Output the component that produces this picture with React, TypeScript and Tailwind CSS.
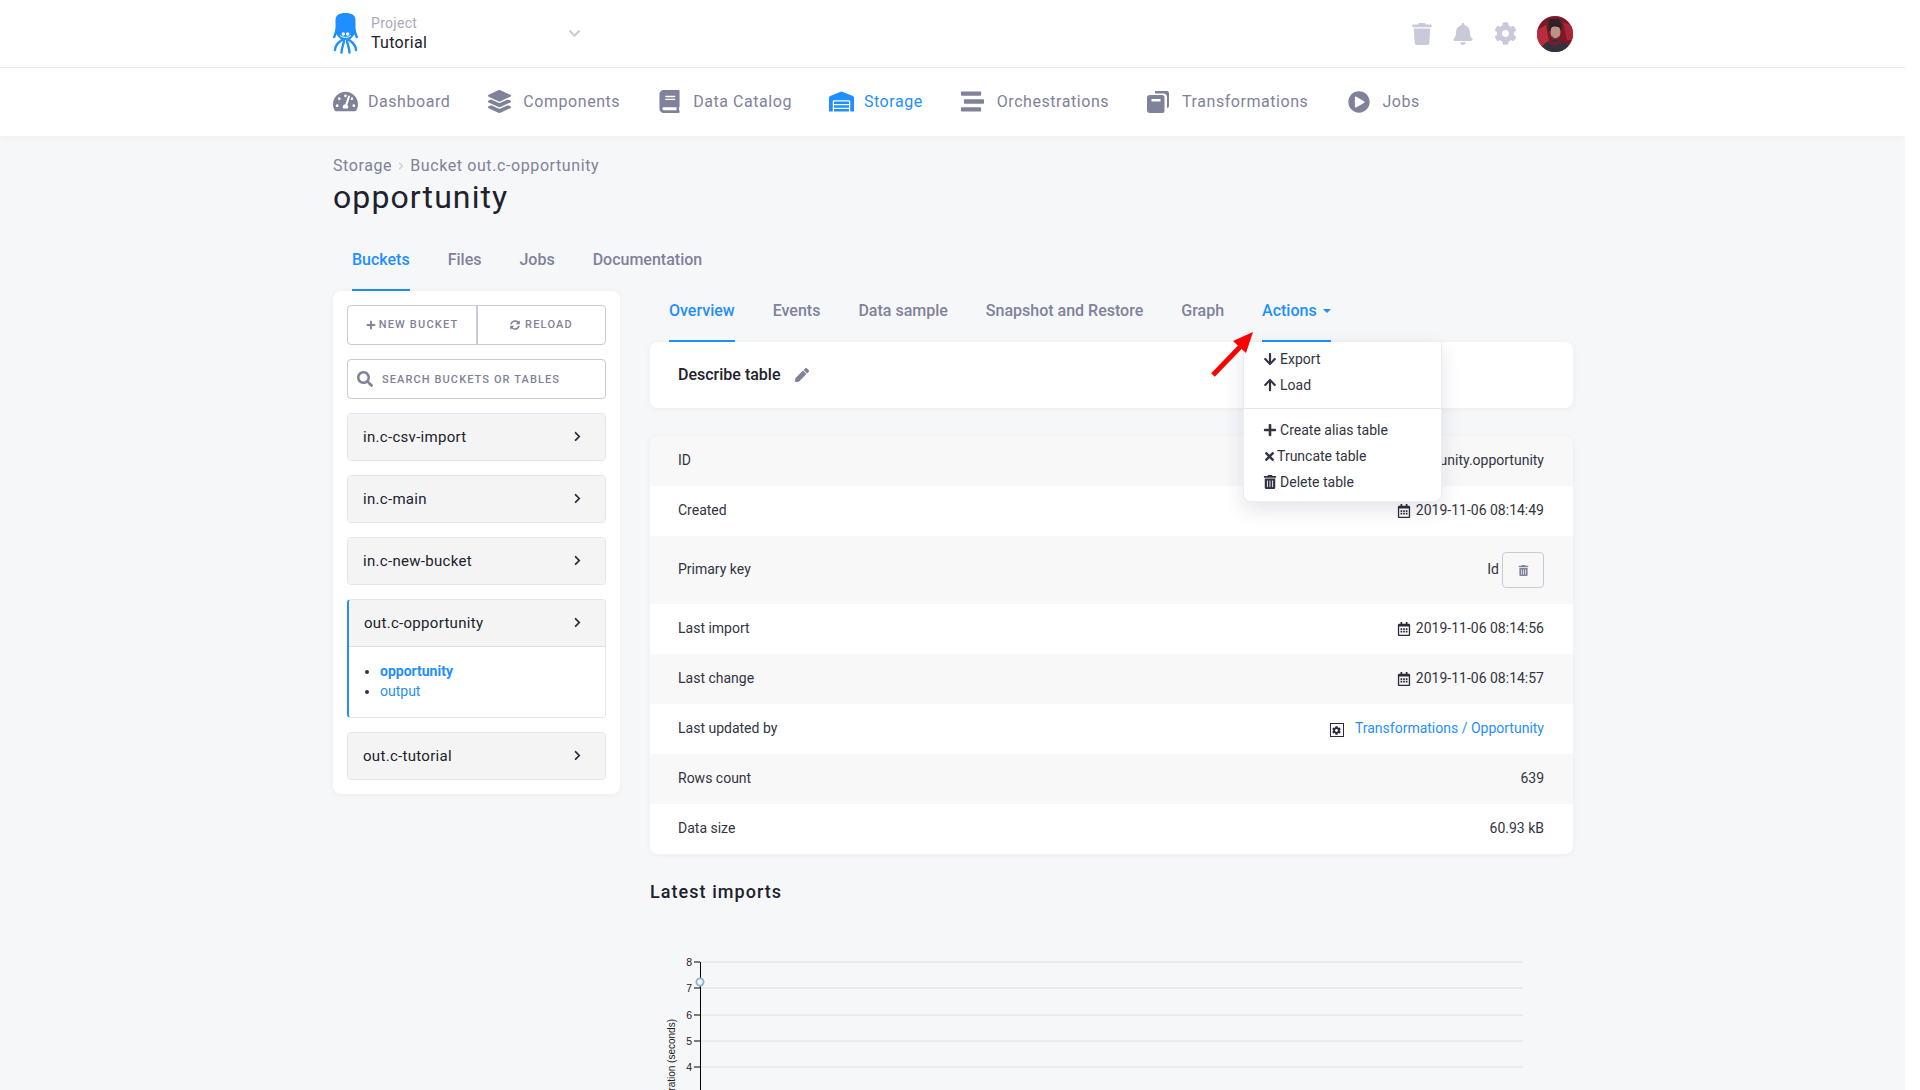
import React from "react";
import {
  FaTachometerAlt, FaLayerGroup, FaBook, FaWarehouse, FaStream, FaPlayCircle, FaTrash, FaBell, FaCog,
  FaChevronDown, FaPlus, FaSyncAlt, FaSearch, FaChevronRight, FaPen, FaArrowDown, FaArrowUp, FaTimes,
  FaTrashAlt, FaRegCalendarAlt,
} from "react-icons/fa";

const font = "font-['Roboto',sans-serif]";

function Logo() {
  return (
    <svg width="25" height="41" viewBox="0 0 25 41" fill="#1f8fff">
      <path d="M2.5 7C2.5 2.5 6 0 12.5 0s10 2.5 10 7v11c0 1.500-.4 3-1.500 4-1.500 3-4.500 5-8.500 5s-7-2-8.500-5c-1.100-1-1.500-2.500-1.500-4z" />
      <circle cx="10.300" cy="21" r="1.700" fill="#fff" />
      <circle cx="14.700" cy="21" r="1.700" fill="#fff" />
      <path d="M7 22.500c3 2.500 8 2.500 11 0" fill="none" stroke="#fff" strokeWidth="1" />
      <g fill="none" stroke="#1f8fff" strokeWidth="2.400" strokeLinecap="round">
        <path d="M3.500 17c-.5 3-1.500 5-2.300 7" />
        <path d="M21.500 17c.5 3 1.500 5 2.300 7" />
        <path d="M9 27c-3 2-6.500 4-7 10" />
        <path d="M16 27c3 2 6.500 4 7 10" />
        <path d="M11 28c-.5 4-2.500 7-2.500 11.500" />
        <path d="M14 28c.5 4 2.500 7 2.500 11.500" />
      </g>
    </svg>
  );
}

function Avatar() {
  return (
    <svg width="36" height="36" viewBox="0 0 36 36" className="rounded-full">
      <rect width="36" height="36" fill="#7a1a26" />
      <path d="M0 14l9-5 3 17-8 6H0z" fill="#b92c3c" />
      <path d="M26 6l10 4v14h-6z" fill="#a82635" />
      <path d="M12 3h10l3 7-1 5H11z" fill="#30242a" />
      <ellipse cx="18.500" cy="16" rx="5" ry="7" fill="#bb9284" />
      <path d="M13 12c3-2 7-2 11 0l-1-4c-3-2-8-1-10 0z" fill="#2b2024" />
      <path d="M15 20c2 3 5 3 7 0v3h-7z" fill="#54393a" />
      <path d="M3 36c2-8 7-12 15-12s14 4 15 12z" fill="#30323c" />
      <path d="M13 24l5 3 5-3 2 3-7 3-7-3z" fill="#7d1b2a" />
    </svg>
  );
}

function NavItem({ icon, label, active, className = "gap-[12px]" }: { icon: React.ReactNode; label: string; active?: boolean; className?: string }) {
  return (
    <div className={`flex items-center ${className} ${active ? "text-[#1f8fff]" : "text-[#80829a]"}`}>
      {icon}
      <span className="text-[16px] tracking-[0.55px]">{label}</span>
    </div>
  );
}

function TransformIcon() {
  return (
    <svg width="22" height="22" viewBox="0 0 22 22" fill="#80829a">
      <path d="M8 0h12a2 2 0 0 1 2 2v13c0 1-1 2-2 2V6c0-2-1.500-3.500-3.500-3.500H8z" />
      <path d="M3 4h12a2.500 2.500 0 0 1 2.500 2.500V20a2 2 0 0 1-2 2H3a3 3 0 0 1-3-3V7a3 3 0 0 1 3-3zm1.500 4v2.500h9V8z" fillRule="evenodd" />
    </svg>
  );
}

function Bucket({ name, children, active }: { name: string; children?: React.ReactNode; active?: boolean }) {
  return (
    <div className={`overflow-hidden rounded-[4px] border border-[#e3e6f0] ${active ? "border-l-2 border-l-[#1f8fff]" : ""}`}>
      <div className={`flex items-center justify-between bg-[#f4f4f5] ${active ? "h-[47px] border-b border-b-[#dfdfe3] pl-[15px]" : "h-[46px] pl-[15px]"} pr-[22px] text-[15px] tracking-[0.3px] text-[#20212c]`}>
        <span className="pt-[1px]">{name}</span>
        <FaChevronRight className="-mt-[1px] text-[11px] text-[#2a2b3a]" />
      </div>
      {children}
    </div>
  );
}

function Cal() {
  return <FaRegCalendarAlt className="text-[14px] text-[#2b2c3a]" />;
}

function Row({ label, h = "h-[50px]", alt, children }: { label: string; h?: string; alt?: boolean; children: React.ReactNode }) {
  return (
    <div className={`flex ${h} items-center justify-between pb-[1px] pl-[28px] pr-[29px] ${alt ? "bg-[#f8f8f9]" : "bg-white"} text-[14px] text-[#333442]`}>
      <span>{label}</span>
      <div className="flex items-center">{children}</div>
    </div>
  );
}

function Chart() {
  const ticks = [
    [8, 962], [7, 988], [6, 1015], [5, 1041], [4, 1067],
  ] as const;
  return (
    <svg width="923" height="186" viewBox="650 904 923 186" className="block">
      {ticks.map(([n, y]) => (
        <g key={n}>
          <line x1="700" x2="1523" y1={y} y2={y} stroke="#e0e0e3" strokeWidth="1" />
          <line x1="694" x2="700" y1={y} y2={y} stroke="#000" strokeWidth="1" />
          <text x="692" y={y + 4} textAnchor="end" fontSize="10.500" fill="#222" fontFamily="Liberation Sans, sans-serif">{n}</text>
        </g>
      ))}
      <line x1="700.500" x2="700.500" y1="962" y2="1090" stroke="#000" strokeWidth="1" />
      <circle cx="700" cy="982" r="3.600" fill="#f6f7f9" stroke="#8fb0cc" strokeWidth="1.800" />
      <text transform="translate(675,1019) rotate(-90)" textAnchor="end" fontSize="10" fill="#222" fontFamily="Liberation Sans, sans-serif">Duration (seconds)</text>
    </svg>
  );
}

export default function App() {
  return (
    <div className={`${font} h-[1090px] w-[1905px] overflow-hidden bg-[#f6f7f9]`}>
      <header className="relative bg-white shadow-[0_2px_8px_rgba(0,0,0,0.03)]">
        <div className="h-[68px] border-b border-[#e6e6ee]">
          <div className="ml-[333px] flex h-[67px] w-[1240px] items-center">
            <div className="flex w-[235px] items-center">
              <Logo />
              <div className="-mt-[2px] ml-[13px] leading-[20px]">
                <div className="text-[14px] tracking-[0.3px] text-[#a9abb8]">Project</div>
                <div className="text-[16px] tracking-[0.3px] text-[#20212c]">Tutorial</div>
              </div>
            </div>
            <FaChevronDown className="text-[13px] text-[#c8cad9]" />
            <div className="ml-auto flex items-center text-[#c8cad9]">
              <FaTrash className="text-[22px]" />
              <FaBell className="ml-[19px] text-[22px]" />
              <FaCog className="ml-[20px] text-[23px]" />
              <div className="ml-[20px]"><Avatar /></div>
            </div>
          </div>
        </div>
        <div className="h-[68px]">
          <div className="ml-[333px] flex h-[68px] items-center gap-[38px] pb-[1px]">
            <NavItem icon={<FaTachometerAlt className="text-[25px]" />} label="Dashboard" className="gap-[10px]" />
            <NavItem icon={<FaLayerGroup className="text-[23px]" />} label="Components" className="gap-[12px]" />
            <NavItem icon={<FaBook className="text-[23px]" />} label="Data Catalog" className="gap-[12px]" />
            <NavItem icon={<FaWarehouse className="text-[25px]" />} label="Storage" active className="-ml-[1px] gap-[10px]" />
            <NavItem icon={<FaStream className="text-[23px]" />} label="Orchestrations" className="gap-[13px]" />
            <NavItem icon={<TransformIcon />} label="Transformations" className="gap-[13px]" />
            <NavItem icon={<FaPlayCircle className="text-[22px]" />} label="Jobs" className="ml-[2px] gap-[12px]" />
          </div>
        </div>
      </header>

      <main className="ml-[333px] w-[1240px]">
        <div className="mt-[20px] flex items-center text-[16px] leading-[20px] tracking-[0.6px] text-[#80829a]">
          <span>Storage</span>
          <FaChevronRight className="mx-[5px] text-[8px] text-[#c8cad9]" />
          <span>Bucket out.c-opportunity</span>
        </div>
        <h1 className="mt-[1px] text-[32px] leading-[40px] tracking-[1.1px] text-[#20212c]">opportunity</h1>
        <div className="mt-[12px] flex h-[62px] gap-[38px] pl-[19px] text-[16px] font-medium text-[#80829a]">
          <div className="flex items-center border-b-2 border-[#1f8fff] pt-[1px] text-[#1f8fff]">Buckets</div>
          <div className="flex items-center pb-[1px]">Files</div>
          <div className="flex items-center pb-[1px]">Jobs</div>
          <div className="flex items-center pb-[1px]">Documentation</div>
        </div>

        <div className="flex items-start gap-[30px]">
          <aside className="w-[287px] rounded-[8px] bg-white p-[14px] shadow-[0_1px_6px_rgba(30,40,80,0.05)]">
            <div className="flex h-[40px] rounded-[4px] border border-[#c8cad9] text-[11px] font-medium tracking-[1.2px] text-[#80829a]">
              <div className="flex w-[130px] items-center justify-center gap-[3px] border-r-2 border-[#c8cad9]"><FaPlus className="text-[10px]" />NEW BUCKET</div>
              <div className="flex flex-1 items-center justify-center gap-[5px]"><FaSyncAlt className="text-[10px]" />RELOAD</div>
            </div>
            <div className="mt-[14px] flex h-[40px] items-center gap-[9px] rounded-[4px] border border-[#c8cad9] pl-[9px] text-[11px] font-medium tracking-[1.1px] text-[#80829a]">
              <FaSearch className="text-[16px]" /><span className="pt-[2px]">SEARCH BUCKETS OR TABLES</span>
            </div>
            <div className="mt-[14px] flex flex-col gap-[14px]">
              <Bucket name="in.c-csv-import" />
              <Bucket name="in.c-main" />
              <Bucket name="in.c-new-bucket" />
              <Bucket name="out.c-opportunity" active>
                <ul className="h-[70px] list-disc bg-white pl-[31px] pt-[14px] text-[14px] leading-[20px] text-[#1f8fff] marker:text-[#333442]">
                  <li className="font-bold">opportunity</li>
                  <li>output</li>
                </ul>
              </Bucket>
              <Bucket name="out.c-tutorial" />
            </div>
          </aside>

          <section className="w-[923px]">
            <div className="relative flex h-[51px] gap-[38px] pl-[19px] text-[16px] font-medium text-[#80829a]">
              <div className="flex items-center border-b-2 border-[#1f8fff] pb-[10px] text-[#1f8fff]">Overview</div>
              <div className="flex items-center pb-[12px]">Events</div>
              <div className="flex items-center pb-[12px]">Data sample</div>
              <div className="flex items-center pb-[12px]">Snapshot and Restore</div>
              <div className="flex items-center pb-[12px]">Graph</div>
              <div className="relative flex items-center gap-[6px] border-b-2 border-[#1f8fff] pb-[10px] text-[#1f8fff]">
                Actions
                <span className="mt-[1px] h-0 w-0 border-x-[4px] border-t-[4px] border-x-transparent border-t-[#1f8fff]" />
                <svg className="absolute left-[-57px] top-[40px] z-20" width="50" height="54" viewBox="0 0 50 54">
                  <path d="M8 44L35 16" stroke="#ff0000" strokeWidth="5" />
                  <path d="M48 1L28 10L41 22z" fill="#ff0000" />
                </svg>
                <div className="absolute left-[-19px] top-[51px] z-10 w-[199px] rounded-b-[8px] border border-t-0 border-[#ececf1] bg-white text-[14px] font-normal text-[#333442] shadow-[0_8px_20px_rgba(30,40,80,0.12)]">
                  <div className="pb-[10px] pt-[4px]">
                    <div className="flex h-[26px] items-center pl-[19px]"><FaArrowDown className="mr-[3px] text-[14px]" />Export</div>
                    <div className="flex h-[26px] items-center pl-[19px]"><FaArrowUp className="mr-[3px] text-[14px]" />Load</div>
                  </div>
                  <div className="border-t border-[#e3e6f0] pb-[6px] pt-[8px]">
                    <div className="flex h-[26px] items-center pl-[19px]"><FaPlus className="mr-[3px] text-[14px]" />Create alias table</div>
                    <div className="flex h-[26px] items-center pl-[19px]"><FaTimes className="mr-[1px] text-[13px]" />Truncate table</div>
                    <div className="flex h-[26px] items-center pl-[19px]"><FaTrashAlt className="mr-[3px] text-[14px]" />Delete table</div>
                  </div>
                </div>
              </div>
            </div>

            <div className="flex h-[66px] items-center rounded-[8px] bg-white pl-[28px] shadow-[0_1px_6px_rgba(30,40,80,0.05)]">
              <span className="text-[16px] font-medium text-[#20212c]">Describe table</span>
              <FaPen className="ml-[15px] text-[14px] text-[#80829a]" />
            </div>

            <div className="mt-[28px] overflow-hidden rounded-[8px] shadow-[0_1px_6px_rgba(30,40,80,0.05)]">
              <Row label="ID" alt>out.c-opportunity.opportunity</Row>
              <Row label="Created"><Cal /><span className="ml-[5px]">2019-11-06 08:14:49</span></Row>
              <Row label="Primary key" h="h-[68px]" alt>
                <span className="-mt-[1px] mr-[3px]">Id</span>
                <div className="mt-[1px] flex h-[36px] w-[42px] items-center justify-center rounded-[4px] border border-[#c8cad9]">
                  <FaTrashAlt className="text-[11px] text-[#80829a]" />
                </div>
              </Row>
              <Row label="Last import"><Cal /><span className="ml-[5px]">2019-11-06 08:14:56</span></Row>
              <Row label="Last change" alt><Cal /><span className="ml-[5px]">2019-11-06 08:14:57</span></Row>
              <Row label="Last updated by">
                <span className="mr-[11px] mt-[3px] flex h-[14px] w-[14px] items-center justify-center border-[1.5px] border-[#2b2c3a]"><FaCog className="text-[9px] text-[#2b2c3a]" /></span>
                <span className="text-[#1f8fff]">Transformations / Opportunity</span>
              </Row>
              <Row label="Rows count" alt>639</Row>
              <Row label="Data size">60.93 kB</Row>
            </div>

            <h2 className="mt-[26px] text-[18px] font-medium leading-[24px] tracking-[1.05px] text-[#20212c]">Latest imports</h2>
            <Chart />
          </section>
        </div>
      </main>
    </div>
  );
}
